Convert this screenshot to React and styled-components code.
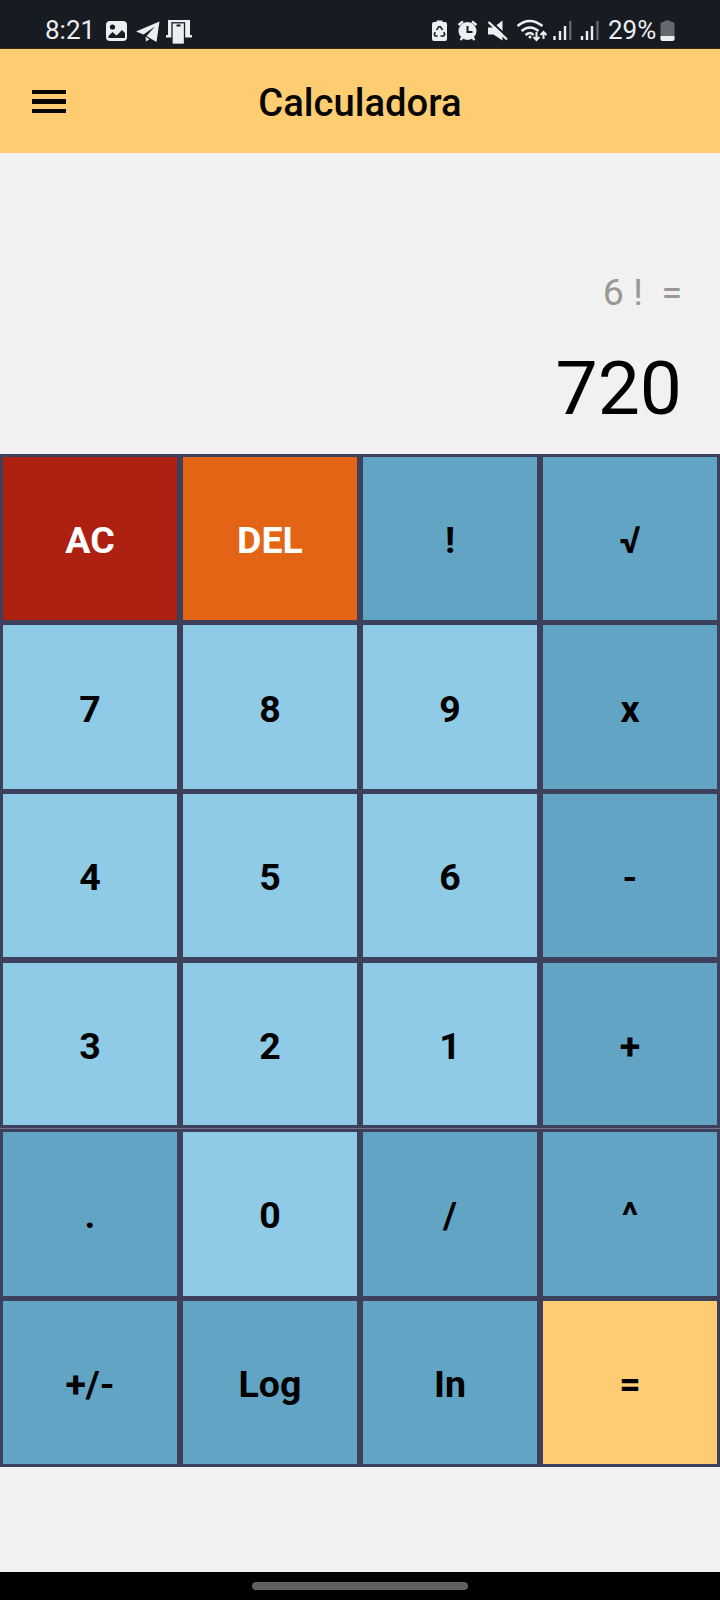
import React from 'react';
import styled, { createGlobalStyle } from 'styled-components';

const GlobalStyle = createGlobalStyle`
  * { box-sizing: border-box; }
  body { margin: 0; background: #f1f1f1; font-family: Roboto, "Liberation Sans", sans-serif; }
`;

const Screen = styled.main`
  display: flex;
  flex-direction: column;
  width: 720px;
  height: 1600px;
  background: #f1f1f1;
`;

const StatusBar = styled.div`
  display: flex;
  justify-content: space-between;
  height: 49px;
  padding: 13px 44px 0 45px;
  background: #171b22;
  border-bottom: 1px solid #3d2e18;
  color: #eceef0;
  font-size: 26px;
  line-height: 35px;
`;

const StatusGroup = styled.div`
  display: flex;
  align-items: flex-start;
`;

const StatusText = styled.span`
  width: ${(p) => p.$width}px;
  white-space: nowrap;
`;

const StatusIcon = styled.svg`
  flex: none;
  display: block;
  height: 34px;
  overflow: visible;
`;

const Header = styled.header`
  display: grid;
  grid-template-columns: 120px 1fr 120px;
  align-items: center;
  height: 104px;
  background: #fecd72;
`;

const MenuButton = styled.button`
  display: flex;
  flex-direction: column;
  justify-self: start;
  gap: 5px;
  margin: 1px 0 0 31.5px;
  padding: 0;
  border: 0;
  background: none;
`;

const MenuLine = styled.span`
  width: 34.5px;
  height: 4.3px;
  background: #080602;
`;

const Title = styled.h1`
  margin: 0;
  padding-top: 3px;
  text-align: center;
  font-size: 38.2px;
  font-weight: 500;
  line-height: 44px;
  color: #080602;
`;

const Display = styled.section`
  display: flex;
  flex-direction: column;
  align-items: flex-end;
  justify-content: flex-end;
  height: 301px;
  padding: 0 38px 21px 0;
`;

const Expression = styled.div`
  font-size: 37.5px;
  line-height: 44px;
  color: #989894;
  white-space: pre;
`;

const Result = styled.div`
  margin-top: 29px;
  font-size: 75px;
  line-height: 90px;
  color: #000;
`;

const Keypad = styled.section`
  display: flex;
  flex-direction: column;
  background: #77738a;
`;

const KeyRow = styled.div`
  display: grid;
  grid-template-columns: repeat(4, 1fr);
  column-gap: 5.4px;
  height: ${(p) => p.$height}px;
  margin-top: ${(p) => p.$gap || 0}px;
  padding: 2.6px 2.7px;
  background: #3d405b;
`;

const tones = {
  clear: ['#ad2012', '#fff'],
  erase: ['#e36414', '#fff'],
  digit: ['#8fcae7', '#000'],
  operator: ['#62a4c3', '#000'],
  equals: ['#fecd72', '#000'],
};

const Key = styled.button`
  display: flex;
  align-items: center;
  justify-content: center;
  padding: 3.4px 0 0;
  border: 0;
  background: ${(p) => tones[p.$tone][0]};
  color: ${(p) => tones[p.$tone][1]};
  font: 700 37.5px/44px Roboto, "Liberation Sans", sans-serif;
`;

const Footer = styled.footer`
  display: flex;
  align-items: center;
  justify-content: center;
  height: 28px;
  margin-top: auto;
  background: #000;
`;

const HomeHandle = styled.div`
  width: 216px;
  height: 8px;
  border-radius: 4px;
  background: #606060;
`;

const W = '#eceef0';
const D = '#171b22';

// Status glyphs share one vertical scale: y = 0 sits 13px below the screen's top.
const NotificationIcons = () => (
  <StatusIcon width="92" viewBox="0 0 92 34">
    <rect x="1" y="8" width="21" height="20" rx="4" fill={W} />
    <circle cx="7.500" cy="14" r="2.600" fill={D} />
    <path d="M3.500 25v-2l4-4 4 3.500 5.500-5.500 3 3v5z" fill={D} />
    <path d="M31 18.500L54.500 8.500 51.500 29l-6-3.500-4-2.500L50 13.500 38.500 21.500z" fill={W} />
    <path d="M40.500 23.800l4 2.500-3.500 2.200z" fill={W} />
    <path d="M63 7h22v15h2v2.500H61V22h2z" fill={W} />
    <rect x="67" y="9.800" width="12.500" height="21.500" fill={W} stroke={D} strokeWidth="1.300" />
    <path d="M71.500 12.500h4" stroke={D} strokeWidth="2" />
  </StatusIcon>
);

const SystemIcons = () => (
  <StatusIcon width="176" viewBox="432 13 176 34">
    <path d="M434 22h2.500v-1.500h6V22h2.500q2 0 2 2v15q0 2-2 2h-11q-2 0-2-2V24q0-2 2-2z" fill={W} />
    <path d="M436.500 30l2.300-3.200h1.600l2.200 3.200m1.200 2l1 2.400-1.200 1.600h-3m-3 0h-2.400l-1-1.600 1-2.400" fill="none" stroke={D} strokeWidth="1.500" />
    <circle cx="467.500" cy="31" r="9" fill={W} />
    <path d="M458.500 25l4.500-3.500m13.500 3.500l-4.500-3.500M462.500 37.500l-2 2.500m12-2.500l2 2.500" stroke={W} strokeWidth="2.500" />
    <path d="M467.500 26v6h5" fill="none" stroke={D} strokeWidth="2" />
    <path d="M488 27.500h5.500l9-7v20l-9-6H488z" fill={W} />
    <path d="M490 20.500l18 17" stroke={D} strokeWidth="2" />
    <path d="M488.500 22l18.500 17.500" stroke={W} strokeWidth="2.400" />
    <path d="M517.500 26q12-10 25 0M521.500 31q8.500-7 17 0M525.500 35q5-4 8 0" fill="none" stroke={W} strokeWidth="2.500" />
    <circle cx="530" cy="37" r="1.500" fill={W} />
    <path d="M536.500 32v8m-3-3l3 3 3-3M543.500 39v-7m-3 3l3-3 3 3" fill="none" stroke={W} strokeWidth="2" />
    <path d="M554.500 36v4M560 31v9M565 26v14M582 36v4M587 31v9M592 26v14" stroke={W} strokeWidth="2.400" />
    <path d="M570.300 21v19M597.500 21v19" stroke="#686b70" strokeWidth="2.200" />
  </StatusIcon>
);

const BatteryIcon = () => (
  <StatusIcon width="16" viewBox="660 13 16 34">
    <path d="M662.500 22h2v-1.500h6V22h2q2 0 2 2v15q0 2-2 2h-10q-2 0-2-2V24q0-2 2-2z" fill="#67696f" />
    <path d="M660.500 36h14v3q0 2-2 2h-10q-2 0-2-2z" fill={W} />
  </StatusIcon>
);

const rows = [
  [['AC', 'clear'], ['DEL', 'erase'], ['!', 'operator'], ['√', 'operator']],
  [['7', 'digit'], ['8', 'digit'], ['9', 'digit'], ['x', 'operator']],
  [['4', 'digit'], ['5', 'digit'], ['6', 'digit'], ['-', 'operator']],
  [['3', 'digit'], ['2', 'digit'], ['1', 'digit'], ['+', 'operator']],
  [['.', 'operator'], ['0', 'digit'], ['/', 'operator'], ['^', 'operator']],
  [['+/-', 'operator'], ['Log', 'operator'], ['In', 'operator'], ['=', 'equals']],
];

export default function App() {
  return (
    <Screen>
      <GlobalStyle />
      <StatusBar>
        <StatusGroup>
          <StatusText $width={60}>8:21</StatusText>
          <NotificationIcons />
        </StatusGroup>
        <StatusGroup>
          <SystemIcons />
          <StatusText $width={52}>29%</StatusText>
          <BatteryIcon />
        </StatusGroup>
      </StatusBar>
      <Header>
        <MenuButton aria-label="Menu">
          <MenuLine />
          <MenuLine />
          <MenuLine />
        </MenuButton>
        <Title>Calculadora</Title>
      </Header>
      <Display>
        <Expression>{'6 !  ='}</Expression>
        <Result>720</Result>
      </Display>
      <Keypad>
        {rows.map((row, i) => (
          <KeyRow key={i} $height={i === 3 ? 167.8 : 168.7} $gap={i === 4 ? 1.6 : 0}>
            {row.map(([label, tone]) => (
              <Key key={label} $tone={tone}>{label}</Key>
            ))}
          </KeyRow>
        ))}
      </Keypad>
      <Footer>
        <HomeHandle />
      </Footer>
    </Screen>
  );
}
